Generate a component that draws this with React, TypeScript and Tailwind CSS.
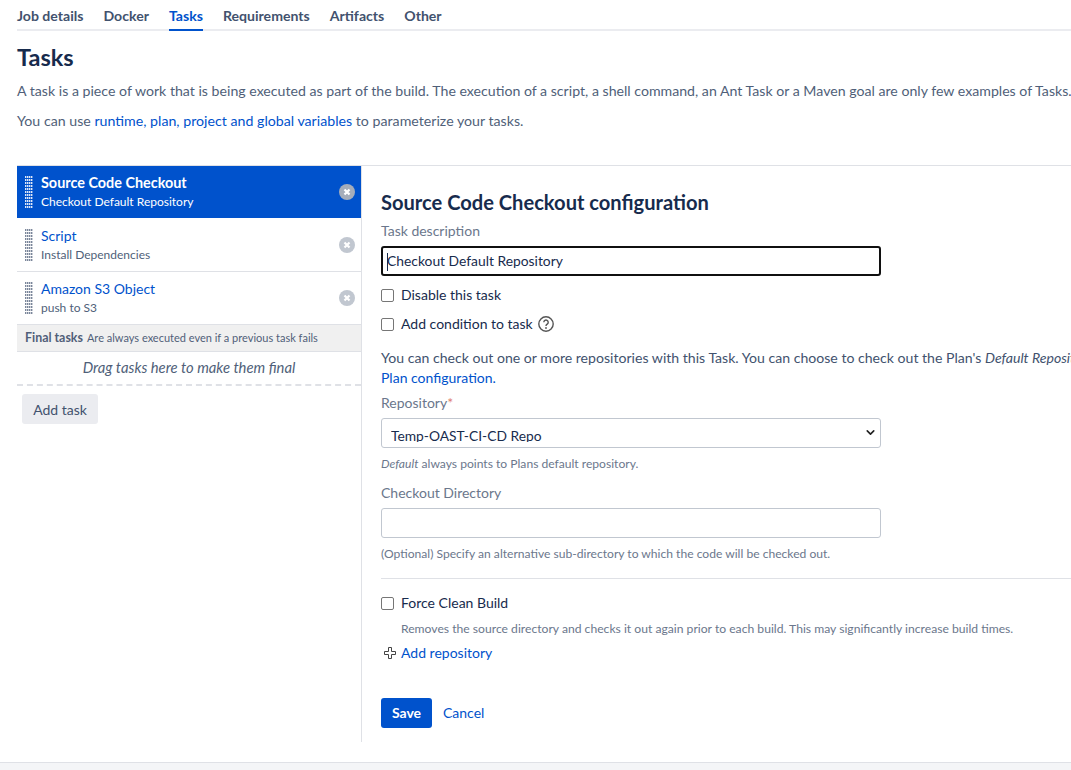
import { ChevronDown } from 'lucide-react';

function DragHandle({ light }: { light?: boolean }) {
  const fill = light ? '#dfe7f7' : '#7a869a';
  const dots = [];
  for (let r = 0; r < 11; r++) {
    for (let c = 0; c < 4; c++) {
      dots.push(<rect key={`${r}-${c}`} x={c * 2} y={r * 3} width="1.4" height="2" fill={fill} />);
    }
  }
  return (
    <svg width="8" height="33" viewBox="0 0 8 33" className="shrink-0">
      {dots}
    </svg>
  );
}

function RemoveIcon({ muted }: { muted?: boolean }) {
  return (
    <svg width="16" height="16" viewBox="0 0 16 16" className="shrink-0">
      <circle cx="8" cy="8" r="8" fill={muted ? '#c1c7d0' : '#a5adba'} />
      <path d="M5.5 5.5l5 5M10.5 5.5l-5 5" stroke="#fff" strokeWidth="2.2" />
    </svg>
  );
}

function TaskRow({ title, sub, active }: { title: string; sub: string; active?: boolean }) {
  return (
    <div
      className={
        active
          ? 'mb-px flex h-[52px] items-start bg-[#0052cc] pl-2 pr-[6px] pt-[10px] text-white'
          : 'flex h-[53px] items-start border-b border-[#dfe1e6] pl-2 pr-[6px] pt-[10px]'
      }
    >
      <DragHandle light={active} />
      <div className="-mt-px ml-2 min-w-0 flex-1">
        <div className={active ? 'text-[14.4px] leading-[15px] font-bold' : 'text-[14px] leading-[15px] text-[#0052cc]'}>{title}</div>
        <div className={active ? 'mt-[4px] text-[12px] leading-[16px]' : 'mt-[4px] text-[12px] leading-[16px] text-[#505f79]'}>{sub}</div>
      </div>
      <div className="mt-[8px]">
        <RemoveIcon muted={!active} />
      </div>
    </div>
  );
}

function Check({ label }: { label: string }) {
  return (
    <label className="flex items-center text-[14px] leading-[20px] text-[#172b4d]">
      <span className="mr-[7px] h-[13px] w-[13px] rounded-[2px] border border-[#767676] bg-white" />
      {label}
    </label>
  );
}

const tabs = ['Job details', 'Docker', 'Tasks', 'Requirements', 'Artifacts', 'Other'];

export default function App() {
  return (
    <div className="h-[770px] w-[1071px] overflow-hidden bg-white font-['Lato',sans-serif] text-[14px] text-[#505f79]">
      <div className="h-[762px] pl-[17px]">
        <div className="flex h-[31px] gap-5 border-b-2 border-[#ebecf0] pt-[6px] text-[14.1px]">
          {tabs.map((t) =>
            t === 'Tasks' ? (
              <div key={t} className="-mb-[2px] h-[25px] border-b-2 border-[#0052cc] leading-[20px] font-bold text-[#0052cc]">{t}</div>
            ) : (
              <div key={t} className="leading-[20px] font-bold text-[#42526e]">{t}</div>
            ),
          )}
        </div>

        <h1 className="mt-[10px] text-[23.5px] leading-[32px] font-bold text-[#172b4d]">Tasks</h1>
        <p className="mt-[8px] whitespace-nowrap text-[14.15px] leading-[20px]">
          A task is a piece of work that is being executed as part of the build. The execution of a script, a shell command, an Ant Task or a Maven goal are only few examples of Tasks.
        </p>
        <p className="mt-[10px] whitespace-nowrap text-[14.2px] leading-[20px]">
          You can use <span className="text-[#0052cc]">runtime, plan, project and global variables</span> to parameterize your tasks.
        </p>

        <div className="mt-[34px] flex h-[577px] border-t border-[#dfe1e6]">
          <div className="w-[345px] shrink-0 border-r border-[#dfe1e6]">
            <TaskRow active title="Source Code Checkout" sub="Checkout Default Repository" />
            <TaskRow title="Script" sub="Install Dependencies" />
            <TaskRow title="Amazon S3 Object" sub="push to S3" />
            <div className="flex h-[27px] items-center gap-[4px] border-b border-[#dfe1e6] bg-[#f0f0f0] pl-2 text-[11px]">
              <b className="text-[12.4px] font-bold">Final tasks</b> Are always executed even if a previous task fails
            </div>
            <div className="h-[34px] border-b-2 border-dashed border-[#dfe1e6] text-center text-[14.8px] leading-[30px] italic">
              Drag tasks here to make them final
            </div>
            <button className="mt-[8px] ml-[5px] h-[30px] w-[76px] rounded-[3px] bg-[#ebecf0] text-[14px] text-[#42526e]">Add task</button>
          </div>

          <div className="min-w-0 flex-1 pl-[19px] pt-[24px]">
            <h2 className="text-[20.1px] leading-[24px] font-bold text-[#172b4d]">Source Code Checkout configuration</h2>
            <div className="mt-[7px] leading-[20px] text-[#6b778c]">Task description</div>
            <div className="mt-[5px] flex h-[30px] w-[500px] items-center rounded-[3px] border-2 border-[#101010] pl-[4px] pt-px text-[13.85px] text-[#172b4d]">
              <span className="-mr-px h-[18px] w-px bg-[#172b4d]" />
              Checkout Default Repository
            </div>
            <div className="mt-[9px]">
              <Check label="Disable this task" />
            </div>
            <div className="mt-[9px] flex items-center">
              <Check label="Add condition to task" />
              <svg width="16" height="16" viewBox="0 0 16 16" fill="none" className="ml-[5px]">
                <circle cx="8" cy="8" r="7.2" stroke="#555" strokeWidth="1.4" />
                <path d="M5.8 6.2a2.2 2.2 0 1 1 3.4 1.9c-.8.5-1.2.9-1.2 1.8" stroke="#555" strokeWidth="1.4" />
                <circle cx="8" cy="12" r="0.9" fill="#555" />
              </svg>
            </div>
            <p className="mt-[14px] whitespace-nowrap text-[14.1px] leading-[20px] text-[#42526e]">
              You can check out one or more repositories with this Task. You can choose to check out the Plan's <i>Default Repository</i> or any other repository from the
            </p>
            <div className="leading-[20px] text-[#0052cc]">Plan configuration.</div>
            <div className="mt-[5px] leading-[20px] text-[#6b778c]">
              Repository<span className="text-[#e0806f]">*</span>
            </div>
            <div className="relative mt-[5px] h-[30px] w-[500px] rounded-[3px] border border-[#c1c7d0] pl-[9px]">
              <div className="h-[23px] overflow-hidden pt-[7px] text-[13.8px] leading-[20px] text-[#172b4d]">Temp-OAST-CI-CD Repo</div>
              <ChevronDown size={13} strokeWidth={3} className="absolute top-[7px] right-[3px] text-[#222]" />
            </div>
            <div className="mt-[8px] text-[12.1px] leading-[16px] text-[#6b778c]">
              <i>Default</i> always points to Plans default repository.
            </div>
            <div className="mt-[11px] leading-[20px] text-[#6b778c]">Checkout Directory</div>
            <div className="mt-[5px] h-[30px] w-[500px] rounded-[3px] border border-[#c1c7d0]" />
            <div className="mt-[8px] text-[12.1px] leading-[16px] text-[#6b778c]">
              (Optional) Specify an alternative sub-directory to which the code will be checked out.
            </div>
            <div className="mt-[16px] border-t border-[#dfe1e6]" />
            <div className="mt-[14px]">
              <Check label="Force Clean Build" />
            </div>
            <div className="mt-[8px] pl-[20px] text-[12.15px] leading-[16px] text-[#6b778c]">
              Removes the source directory and checks it out again prior to each build. This may significantly increase build times.
            </div>
            <div className="mt-[6px] flex h-[20px] items-center pl-[3px] leading-[20px] text-[#0052cc]">
              <svg width="12" height="12" viewBox="0 0 12 12" fill="none" className="mr-[5px]">
                <path d="M4.5.5h3v4h4v3h-4v4h-3v-4h-4v-3h4z" stroke="#444" strokeWidth="1" />
              </svg>
              Add repository
            </div>
            <div className="mt-[35px] flex items-center">
              <button className="h-[30px] w-[51px] rounded-[3px] bg-[#0052cc] pb-px text-[14px] font-bold text-white">Save</button>
              <span className="-mt-[2px] ml-[11px] text-[#0052cc]">Cancel</span>
            </div>
          </div>
        </div>
      </div>
      <div className="h-[8px] border-t border-[#dfe1e6] bg-[#f4f5f7]" />
    </div>
  );
}
